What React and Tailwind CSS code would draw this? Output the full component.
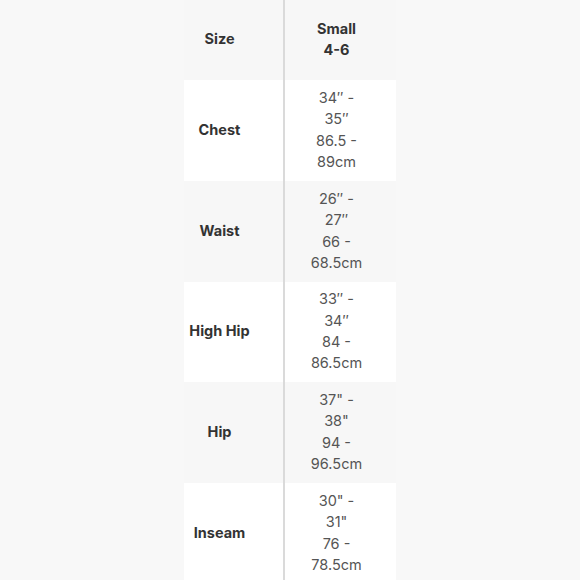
import React from "react";

const rows = [
  { label: "Size", lines: ["Small", "4-6"], head: true, h: "h-[80px]", bg: "bg-[#f7f7f7]" },
  { label: "Chest", lines: ["34″ -", "35″", "86.5 -", "89cm"], h: "h-[101px]", bg: "bg-white" },
  { label: "Waist", lines: ["26″ -", "27″", "66 -", "68.5cm"], h: "h-[101px]", bg: "bg-[#f7f7f7]" },
  { label: "High Hip", lines: ["33″ -", "34″", "84 -", "86.5cm"], h: "h-[100px]", bg: "bg-white" },
  { label: "Hip", lines: ['37" -', '38"', "94 -", "96.5cm"], h: "h-[101px]", bg: "bg-[#f7f7f7]" },
  { label: "Inseam", lines: ['30" -', '31"', "76 -", "78.5cm"], h: "h-[101px]", bg: "bg-white" },
];

export default function App() {
  return (
    <div
      className="h-[580px] w-[580px] overflow-hidden bg-[#f8f8f8] pl-[184px]"
      style={{ fontFamily: "Inter, 'Noto Sans', sans-serif" }}
    >
      <div className="flex w-[212px] flex-col">
        {rows.map((row) => (
          <div key={row.label} className={`flex ${row.h} ${row.bg}`}>
            <div className="flex w-[101px] shrink-0 items-center justify-center border-r-2 border-[#dadada] pr-[28px] pb-[2px] text-[14.5px] font-bold text-[#333]">
              <span className="whitespace-nowrap">{row.label}</span>
            </div>
            <div
              className={`flex flex-1 flex-col items-center justify-center pr-[8px] pb-[2px] text-[14.5px] leading-[21.3px] ${
                row.head ? "font-bold text-[#333]" : "text-[#555]"
              }`}
            >
              {row.lines.map((l) => (
                <span key={l} className="whitespace-nowrap">
                  {l}
                </span>
              ))}
            </div>
          </div>
        ))}
      </div>
    </div>
  );
}
